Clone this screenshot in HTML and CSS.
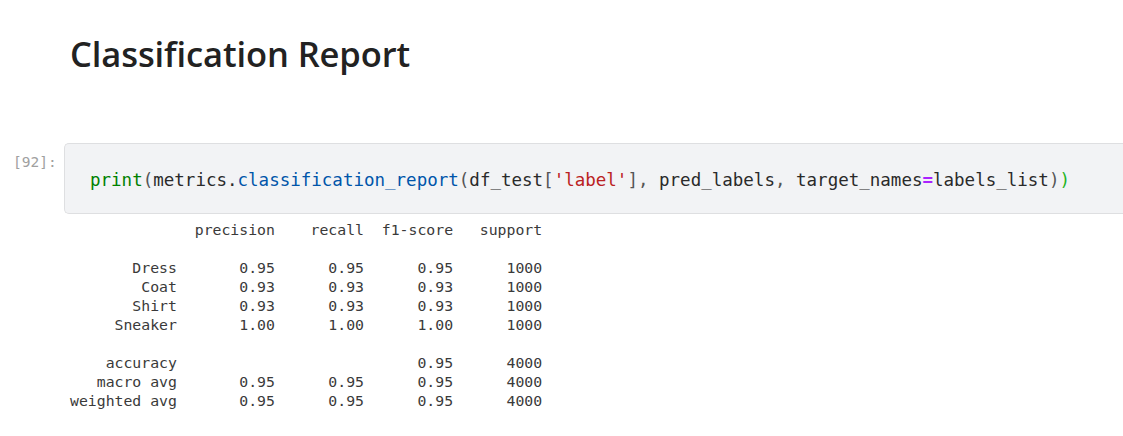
FILE: index.html
```html
<!DOCTYPE html>
<html>
<head>
<meta charset="utf-8">
<link rel="stylesheet" href="styles.css">
</head>
<body>
<div class="notebook">
  <div class="md-cell">
    <h1 class="title">Classification Report</h1>
  </div>
  <div class="code-cell">
    <div class="prompt">[92]:</div>
    <div class="input"><pre class="code"><span class="bi">print</span><span class="pn">(</span>metrics.<span class="prop">classification_report</span><span class="pn">(</span>df_test<span class="pn">[</span><span class="str">'label'</span><span class="pn">],</span> pred_labels<span class="pn">,</span> target_names<span class="op">=</span>labels_list<span class="pn">)</span><span class="match">)</span></pre></div>
  </div>
  <div class="output-row">
    <pre class="output">              precision    recall  f1-score   support

       Dress       0.95      0.95      0.95      1000
        Coat       0.93      0.93      0.93      1000
       Shirt       0.93      0.93      0.93      1000
     Sneaker       1.00      1.00      1.00      1000

    accuracy                           0.95      4000
   macro avg       0.95      0.95      0.95      4000
weighted avg       0.95      0.95      0.95      4000</pre>
  </div>
</div>
</body>
</html>
```
FILE: styles.css
```css
html, body {
  margin: 0;
  padding: 0;
  background: #ffffff;
}
.notebook {
  display: flex;
  flex-direction: column;
  padding-top: 28px;
}
.md-cell {
  padding-left: 70px;
}
.title {
  margin: 0;
  font-family: "Open Sans", sans-serif;
  font-weight: 600;
  font-size: 34.5px;
  line-height: 52px;
  color: #222222;
  letter-spacing: -0.1px;
}
.code-cell {
  display: flex;
  margin-top: 63px;
}
.prompt {
  width: 64px;
  flex: none;
  box-sizing: border-box;
  padding: 10px 7px 0 13px;
  font-family: "DejaVu Sans Mono", monospace;
  font-size: 14.5px;
  line-height: 18px;
  color: #a0a0a0;
}
.input {
  flex: 1;
  background: #f2f3f5;
  border: 1px solid #dedfe1;
  border-right: none;
  border-radius: 5px 0 0 5px;
  height: 71px;
  box-sizing: border-box;
  display: flex;
  align-items: center;
  padding-left: 25px;
}
.code {
  margin: 0;
  font-family: "DejaVu Sans Mono", monospace;
  font-size: 17.5px;
  line-height: 24px;
  color: #2a2a2a;
  padding-top: 2px;
}
.pn { color: #555555; }
.bi { color: #008000; }
.prop { color: #0055aa; }
.str { color: #ba2121; }
.op { color: #aa22ff; font-weight: bold; }
.match { color: #22b422; }
.output-row {
  padding-left: 70px;
  padding-top: 6px;
}
.output {
  margin: 0;
  font-family: "DejaVu Sans Mono", monospace;
  font-size: 14.8px;
  line-height: 19px;
  color: #3a3a3a;
}
```
